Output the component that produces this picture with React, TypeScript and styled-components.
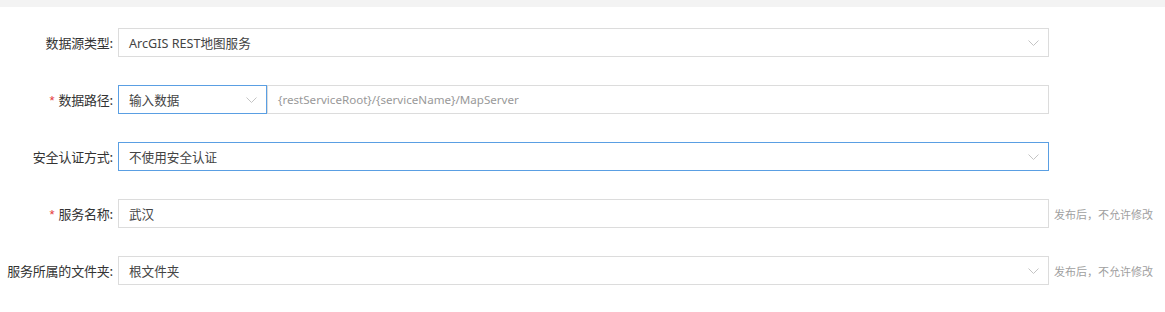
import React from "react";
import styled, { createGlobalStyle } from "styled-components";

const Global = createGlobalStyle`
  html, body { margin: 0; padding: 0; background: #fff; }
  body { font-family: "Noto Sans", "Noto Sans CJK SC", sans-serif; }
  * { box-sizing: border-box; }
`;

const Page = styled.div`
  width: 1165px;
  height: 312px;
  overflow: hidden;
  background: #fff;
`;

const TopBar = styled.div`
  height: 7px;
  background: #f3f3f3;
`;

const Form = styled.div`
  display: flex;
  flex-direction: column;
  gap: 28px;
  padding-top: 21px;
`;

const Row = styled.div`
  display: flex;
  align-items: center;
  height: 29px;
`;

const Label = styled.div`
  width: 118px;
  padding-right: 5px;
  text-align: right;
  font-family: "Noto Sans CJK SC", sans-serif;
  font-size: 13px;
  color: #333;
  white-space: nowrap;
  letter-spacing: -0.2px;
`;

const Star = styled.span`
  color: #e4393c;
  margin-right: 4px;
  font-family: "Liberation Sans", sans-serif;
`;

const Field = styled.div<{ $w?: number; $focus?: boolean }>`
  position: relative;
  display: flex;
  align-items: center;
  height: 29px;
  width: ${(p) => (p.$w ? `${p.$w}px` : "auto")};
  flex: ${(p) => (p.$w ? "none" : "1")};
  border: 1px solid ${(p) => (p.$focus ? "#5a9fe3" : "#dcdcdc")};
  background: #fff;
  padding: 0 10px;
  font-family: "Noto Sans", "Noto Sans CJK SC", sans-serif;
  font-size: 12.6px;
  color: #444;
`;

const Placeholder = styled.span`
  color: #999;
  font-size: 11.6px;
`;

const Chevron = styled.svg`
  position: absolute;
  right: 9px;
  top: 11px;
  width: 11px;
  height: 6px;
`;

const Controls = styled.div`
  display: flex;
  width: 931px;
`;

const Hint = styled.div`
  margin-left: 5px;
  font-family: "Noto Sans CJK SC", sans-serif;
  font-size: 11px;
  color: #a0a0a0;
  white-space: nowrap;
`;

const Arrow = () => (
  <Chevron viewBox="0 0 11 6">
    <path d="M0.5 0.5 L5.5 5.5 L10.5 0.5" fill="none" stroke="#c4c4c4" strokeWidth="1" />
  </Chevron>
);

export default function App() {
  return (
    <Page>
      <Global />
      <TopBar />
      <Form>
        <Row>
          <Label>数据源类型:</Label>
          <Controls>
            <Field>
              ArcGIS REST地图服务
              <Arrow />
            </Field>
          </Controls>
        </Row>
        <Row>
          <Label>
            <Star>*</Star>数据路径:
          </Label>
          <Controls>
            <Field $w={149} $focus>
              输入数据
              <Arrow />
            </Field>
            <Field>
              <Placeholder>{"{restServiceRoot}/{serviceName}/MapServer"}</Placeholder>
            </Field>
          </Controls>
        </Row>
        <Row>
          <Label>安全认证方式:</Label>
          <Controls>
            <Field $focus>
              不使用安全认证
              <Arrow />
            </Field>
          </Controls>
        </Row>
        <Row>
          <Label>
            <Star>*</Star>服务名称:
          </Label>
          <Controls>
            <Field>武汉</Field>
          </Controls>
          <Hint>发布后，不允许修改</Hint>
        </Row>
        <Row>
          <Label>服务所属的文件夹:</Label>
          <Controls>
            <Field>
              根文件夹
              <Arrow />
            </Field>
          </Controls>
          <Hint>发布后，不允许修改</Hint>
        </Row>
      </Form>
    </Page>
  );
}
